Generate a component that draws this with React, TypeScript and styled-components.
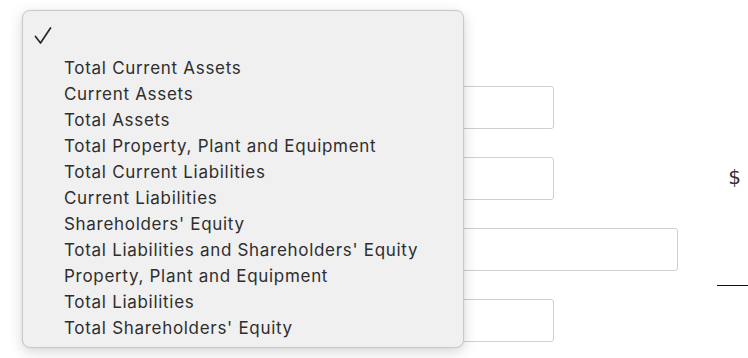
import styled, { createGlobalStyle } from 'styled-components'

const options = [
  'Total Current Assets',
  'Current Assets',
  'Total Assets',
  'Total Property, Plant and Equipment',
  'Total Current Liabilities',
  'Current Liabilities',
  "Shareholders' Equity",
  "Total Liabilities and Shareholders' Equity",
  'Property, Plant and Equipment',
  'Total Liabilities',
  "Total Shareholders' Equity",
]

export default function App() {
  return (
    <Page>
      <GlobalStyle />
      <Form>
        <Field row={1} />
        <Field row={2} />
        <Dollar>$</Dollar>
        <Field row={3} wide />
        <Rule />
        <Field row={4} />
      </Form>
      <SelectMenu />
    </Page>
  )
}

const SelectMenu = () => {
  return (
    <Menu>
      <CheckedItem>
        <CheckIcon width="18" height="18" viewBox="0 0 18 18">
          <path d="M1.5 9.5 L6.5 16 L16.5 1" />
        </CheckIcon>
      </CheckedItem>
      {options.map((label) => (
        <Item key={label}>{label}</Item>
      ))}
    </Menu>
  )
}

const GlobalStyle = createGlobalStyle`
  html, body {
    margin: 0;
    background: #fff;
  }
  body {
    font-family: Inter, 'Noto Sans', sans-serif;
  }
`

const Page = styled.div`
  position: relative;
  width: 748px;
  height: 358px;
  overflow: hidden;
  background: #fff;
`

const Form = styled.div`
  display: grid;
  grid-template-columns: 300px 378px 1fr;
  grid-auto-rows: 43px;
  row-gap: 28px;
  padding-top: 86px;
`

const Field = styled.input<{ row: number; wide?: boolean }>`
  grid-column: 2;
  grid-row: ${(p) => p.row};
  box-sizing: border-box;
  width: ${(p) => (p.wide ? '100%' : '254px')};
  height: 43px;
  margin: 0;
  border: 1px solid #cfcfcf;
  border-radius: 3px;
  background: #fff;
`

const Dollar = styled.span`
  grid-column: 3;
  grid-row: 2;
  justify-self: end;
  align-self: center;
  padding: 0 7px 3px 0;
  font-family: 'DejaVu Sans', sans-serif;
  font-size: 20px;
  color: #333;
`

const Rule = styled.div`
  grid-column: 3;
  grid-row: 3;
  justify-self: end;
  align-self: start;
  width: 31px;
  height: 1px;
  margin-top: 57px;
  background: #111;
`

const Menu = styled.div`
  position: absolute;
  left: 22px;
  top: 10px;
  box-sizing: border-box;
  width: 442px;
  height: 338px;
  padding: 12px 0 8px;
  background: #f0f0f0;
  border: 1px solid #c9c9c9;
  border-radius: 8px;
  box-shadow: 0 4px 14px rgba(0, 0, 0, 0.16), 0 0 2px rgba(0, 0, 0, 0.08);
`

const CheckedItem = styled.div`
  display: flex;
  align-items: flex-start;
  box-sizing: border-box;
  height: 32px;
  padding: 4px 0 0 11px;
`

const CheckIcon = styled.svg`
  fill: none;
  stroke: #2a2a2a;
  stroke-width: 1.7;
  stroke-linecap: round;
  stroke-linejoin: round;
`

const Item = styled.div`
  height: 26px;
  line-height: 27px;
  padding-left: 41px;
  font-size: 17px;
  letter-spacing: 0.7px;
  color: #2e2e2e;
  white-space: nowrap;
`
